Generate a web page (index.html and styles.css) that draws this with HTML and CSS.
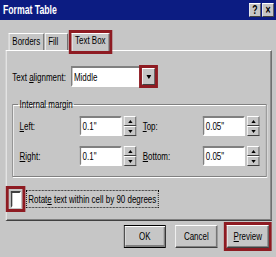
FILE: index.html
```html
<!DOCTYPE html>
<html>
<head>
<meta charset="utf-8">
<link rel="stylesheet" href="styles.css">
</head>
<body>
<div class="frame">
<div class="dialog">
  <div class="titlebar">
    <span class="title">Format Table</span>
    <span class="tbtns"><span class="tbtn">?</span><span class="tbtn">×</span></span>
  </div>
  <div class="tabs">
    <div class="tab">Borders</div>
    <div class="tab fill">Fill</div>
    <div class="tab active hl">Text Box</div>
  </div>
  <div class="panel">
    <div class="align-row">
      <span class="align-lbl">Text <u>a</u>lignment:</span>
      <div class="combo">
        <span class="combo-text">Middle</span>
        <span class="drop hl"><svg width="7" height="4" viewBox="0 0 7 4"><path d="M0 0H7L3.5 4Z" fill="#000"/></svg></span>
      </div>
    </div>
    <fieldset class="group">
      <legend>Internal margin</legend>
      <div class="grid">
        <span class="lbl"><u>L</u>eft:</span>
        <div class="spin"><span class="field">0.1"</span><span class="arrows"><span class="arr up"></span><span class="arr down"></span></span></div>
        <span class="lbl"><u>T</u>op:</span>
        <div class="spin"><span class="field">0.05"</span><span class="arrows"><span class="arr up"></span><span class="arr down"></span></span></div>
        <span class="lbl"><u>R</u>ight:</span>
        <div class="spin"><span class="field">0.1"</span><span class="arrows"><span class="arr up"></span><span class="arr down"></span></span></div>
        <span class="lbl"><u>B</u>ottom:</span>
        <div class="spin"><span class="field">0.05"</span><span class="arrows"><span class="arr up"></span><span class="arr down"></span></span></div>
      </div>
    </fieldset>
    <div class="check-row">
      <span class="check-hl"><span class="checkbox"></span></span>
      <span class="focus">Rotat<u>e</u> text within cell by 90 degrees</span>
    </div>
  </div>
  <div class="buttons">
    <span class="btn default">OK</span>
    <span class="btn">Cancel</span>
    <span class="btn hl"><u>P</u>review</span>
  </div>
</div>
</div>
</body>
</html>
```
FILE: styles.css
```css
html, body {
  margin: 0;
  padding: 0;
  overflow: hidden;
}
body {
  width: 276px;
  height: 257px;
  background: #c6c6c6;
  font-family: "Liberation Sans", Arial, sans-serif;
  font-size: 11px;
  color: #000;
}
.frame {
  width: 276px;
  height: 257px;
  overflow: hidden;
}
/* the whole screenshot is horizontally squeezed: lay out at natural width, then scale */
.dialog {
  width: 381px;
  height: 257px;
  display: flex;
  flex-direction: column;
  transform: scaleX(0.7244);
  transform-origin: 0 0;
}
.titlebar {
  height: 20px;
  flex: none;
  background: #0c1c82;
  display: flex;
  align-items: center;
  justify-content: space-between;
  padding: 0 3px 0 4px;
}
.title {
  color: #fff;
  font-weight: bold;
  font-size: 12px;
}
.tbtns {
  display: flex;
  gap: 2px;
}
.tbtn {
  width: 14px;
  height: 12px;
  background: #c6c6c6;
  border: 1px solid;
  border-color: #fff #404040 #404040 #fff;
  font-weight: bold;
  font-size: 12px;
  line-height: 12px;
  text-align: center;
}
.tabs {
  height: 30px;
  flex: none;
  display: flex;
  align-items: flex-end;
  padding-left: 12px;
}
.tab {
  height: 16px;
  line-height: 15px;
  padding: 0 4px;
  border: 1px solid;
  border-color: #fff #404040 transparent #fff;
  border-bottom: none;
  margin-right: 1px;
}
.tab.fill {
  padding: 0 12px 0 4px;
}
.tab.active {
  height: 17px;
  line-height: 12px;
  margin-left: 4px;
  margin-bottom: -1px;
  padding: 0 4px;
  background: #c6c6c6;
  position: relative;
  z-index: 1;
}
.hl {
  box-shadow: 0 0 0 3px #8e1b22, -1px 0 0 3px #8e1b22, 1px 0 0 3px #8e1b22;
}
.panel {
  flex: none;
  margin-left: 8px;
  width: 365px;
  height: 169px;
  border: 1px solid;
  border-color: #fff #404040 #404040 #fff;
  box-shadow: inset -1px -1px 0 #808080;
  display: flex;
  flex-direction: column;
}
.align-row {
  display: flex;
  align-items: center;
  margin: 15px 0 0 8px;
}
.align-lbl {
  width: 81px;
}
.combo {
  width: 114px;
  height: 17px;
  background: #fff;
  border: 2px solid;
  border-color: #808080 #fff #fff #808080;
  display: flex;
  align-items: center;
}
.combo-text {
  flex: 1;
  padding-left: 2px;
}
.drop {
  width: 16px;
  height: 15px;
  background: #c6c6c6;
  border: 1px solid;
  border-color: #fff #404040 #404040 #fff;
  display: flex;
  align-items: center;
  justify-content: center;
}
.group {
  margin: 11px 6px 0 8px;
  padding: 6px 0 10px 9px;
  border: 1px solid #808080;
  box-shadow: inset 1px 1px 0 #fff, 1px 1px 0 #fff;
  min-width: 0;
}
.group legend {
  padding: 0 2px;
  margin-left: -2px;
}
.grid {
  display: grid;
  grid-template-columns: 83px 87px 83px 78px;
  row-gap: 10px;
  align-items: center;
}
.spin {
  display: flex;
  gap: 3px;
  height: 20px;
}
.field {
  width: 52px;
  height: 16px;
  line-height: 16px;
  background: #fff;
  border: 2px solid;
  border-color: #808080 #fff #fff #808080;
  padding-left: 2px;
}
.arrows {
  width: 17px;
  display: flex;
  flex-direction: column;
}
.arr {
  flex: 1;
  background: #c6c6c6;
  border: 1px solid;
  border-color: #fff #404040 #404040 #fff;
  display: flex;
  align-items: center;
  justify-content: center;
}
.arr::before {
  content: "";
  border-left: 3px solid transparent;
  border-right: 3px solid transparent;
}
.arr.up::before {
  border-bottom: 3px solid #000;
}
.arr.down::before {
  border-top: 3px solid #000;
}
.check-row {
  display: flex;
  align-items: center;
  margin-top: 9px;
}
.check-hl {
  border: 3px solid #8e1b22;
  border-left-width: 4px;
  border-right-width: 4px;
  width: 16px;
  height: 20px;
  padding-left: 3px;
  margin-left: -1px;
  display: flex;
  align-items: center;
}
.checkbox {
  display: block;
  width: 10px;
  height: 13px;
  background: #fff;
  border: 2px solid;
  border-color: #404040 #fff #fff #404040;
}
.focus {
  border: 1px dotted #000;
  padding: 2px 2px;
  margin-left: 1px;
}
.buttons {
  flex: none;
  display: flex;
  justify-content: flex-end;
  gap: 13px;
  padding: 4px 10px 0 0;
}
.btn {
  width: 56px;
  height: 21px;
  line-height: 21px;
  text-align: center;
  border: 1px solid;
  border-color: #fff #404040 #404040 #fff;
  box-shadow: inset -1px -1px 0 #808080;
}
.btn.default {
  border-color: #000;
  box-shadow: inset 1px 1px 0 #fff, inset -2px -2px 0 #808080;
}
.btn.hl {
  box-shadow: inset -1px -1px 0 #808080, 0 0 0 3px #8e1b22, -1px 0 0 3px #8e1b22, 1px 0 0 3px #8e1b22;
}
```
